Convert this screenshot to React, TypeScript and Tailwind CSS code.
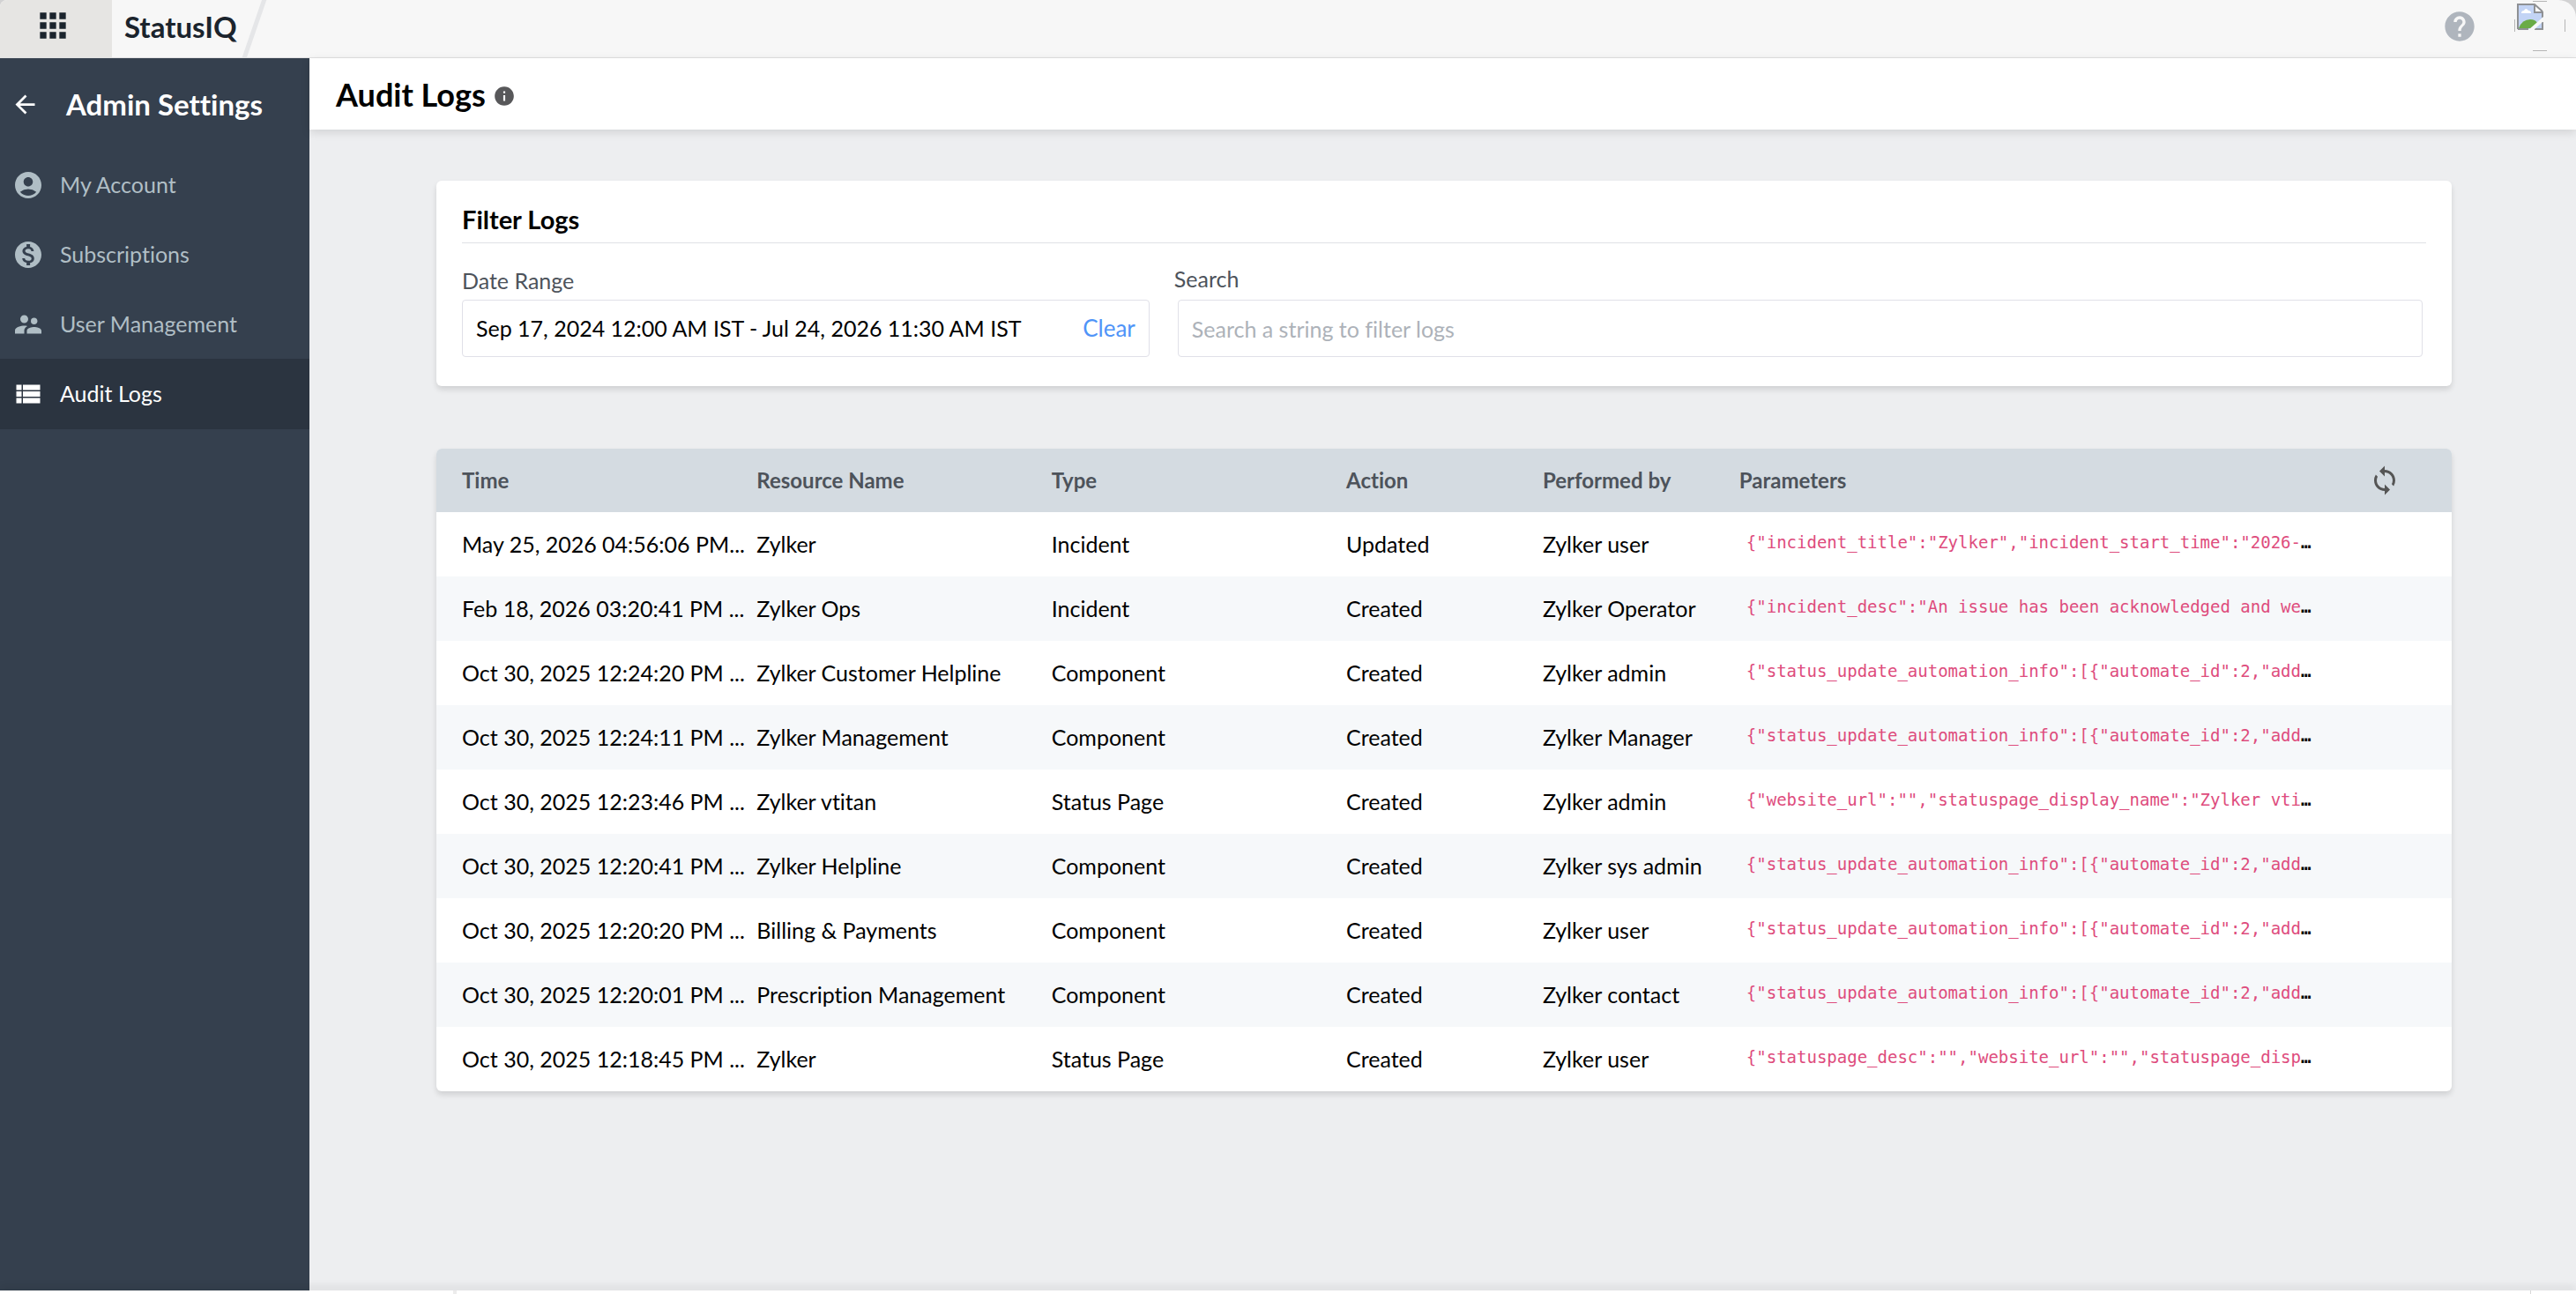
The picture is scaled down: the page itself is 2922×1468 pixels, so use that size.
import type { ReactNode } from "react";
import {
  MdAccountCircle,
  MdApps,
  MdArrowBack,
  MdHelp,
  MdInfo,
  MdMonetizationOn,
  MdSupervisorAccount,
  MdSync,
  MdViewList,
} from "react-icons/md";

const NAV: { label: string; icon: ReactNode; active?: boolean }[] = [
  { label: "My Account", icon: <MdAccountCircle size={36} /> },
  { label: "Subscriptions", icon: <MdMonetizationOn size={36} /> },
  { label: "User Management", icon: <MdSupervisorAccount size={36} /> },
  { label: "Audit Logs", icon: <MdViewList size={36} />, active: true },
];

const COLUMNS = ["Time", "Resource Name", "Type", "Action", "Performed by", "Parameters"];

const AUTOMATION = '{"status_update_automation_info":[{"automate_id":2,"add';

const LOGS = [
  ["May 25, 2026 04:56:06 PM...", "Zylker", "Incident", "Updated", "Zylker user", '{"incident_title":"Zylker","incident_start_time":"2026-'],
  ["Feb 18, 2026 03:20:41 PM ...", "Zylker Ops", "Incident", "Created", "Zylker Operator", '{"incident_desc":"An issue has been acknowledged and we'],
  ["Oct 30, 2025 12:24:20 PM ...", "Zylker Customer Helpline", "Component", "Created", "Zylker admin", AUTOMATION],
  ["Oct 30, 2025 12:24:11 PM ...", "Zylker Management", "Component", "Created", "Zylker Manager", AUTOMATION],
  ["Oct 30, 2025 12:23:46 PM ...", "Zylker vtitan", "Status Page", "Created", "Zylker admin", '{"website_url":"","statuspage_display_name":"Zylker vti'],
  ["Oct 30, 2025 12:20:41 PM ...", "Zylker Helpline", "Component", "Created", "Zylker sys admin", AUTOMATION],
  ["Oct 30, 2025 12:20:20 PM ...", "Billing & Payments", "Component", "Created", "Zylker user", AUTOMATION],
  ["Oct 30, 2025 12:20:01 PM ...", "Prescription Management", "Component", "Created", "Zylker contact", AUTOMATION],
  ["Oct 30, 2025 12:18:45 PM ...", "Zylker", "Status Page", "Created", "Zylker user", '{"statuspage_desc":"","website_url":"","statuspage_disp'],
];

const ROW = "grid grid-cols-[15fr_15fr_15fr_10fr_10fr_30fr_5fr] items-center pl-[29px] pr-7";

function BrokenImage() {
  return (
    <svg x="3" y="3" width="30" height="30" viewBox="0 0 30 30">
      <path d="M1 1h19l9 8v20H1z" fill="#c3d4f5" />
      <path d="M5 11q0-3 3-3 2-4 5 0 3 0 3 3z" fill="#fff" />
      <path d="M2 28q4-10 13-10 6 0 8 4l-7 6z" fill="#6aab46" />
      <path d="M20 1v9h9z" fill="#fff" />
      <path d="M1 29V1h19l9 8M20 1v9h9v6M1 29h12M29 21v8h-9" fill="none" stroke="#8f9194" strokeWidth="2" />
      <path d="M13 30 30 15v5L19 30z" fill="#f7f7f7" />
    </svg>
  );
}

function TopBar() {
  return (
    <div className="shrink-0 bg-[#d2d2d3]">
      <header className="flex h-[66px] items-stretch overflow-hidden rounded-tl-lg rounded-tr-[20px] border-b border-[#e1e1e2] bg-[#f7f7f7]">
        <button type="button" aria-label="Apps" className="flex w-[127px] items-center justify-center bg-[#e6e5e3] pr-2 pb-2 text-[#1b242d]">
          <MdApps size={44} />
        </button>
        <a href="#" className="flex items-center pb-1 pl-[14px] text-[33px] leading-none font-bold text-[#1b242d]">
          StatusIQ
        </a>
        <svg width="32" height="65" viewBox="0 0 32 65" className="ml-1" aria-hidden="true">
          <path d="M4 66 27-1" stroke="#e5e6e8" strokeWidth="5" />
        </svg>
        <div className="ml-auto flex items-start pr-3">
          <button type="button" aria-label="Help" className="mt-[10px] text-[#afb5bd]">
            <MdHelp size={40} />
          </button>
          <button type="button" aria-label="Profile" className="mt-px ml-[42px]">
            <svg width="58" height="57" viewBox="0 0 58 57" aria-hidden="true">
              <path d="M21 .5h16M21 56.5h16M.5 21v14M57.5 21v14" stroke="#b5b5b5" />
              <BrokenImage />
            </svg>
          </button>
        </div>
      </header>
    </div>
  );
}

function Sidebar() {
  return (
    <nav className="w-[351px] shrink-0 bg-[#35404e]">
      <div className="flex h-[104px] items-center pl-3 text-white">
        <a href="#" aria-label="Back">
          <MdArrowBack size={33} />
        </a>
        <h2 className="ml-[30px] text-[33px] leading-10 font-bold">Admin Settings</h2>
      </div>
      <ul>
        {NAV.map((item) => (
          <li key={item.label}>
            <a
              href="#"
              className={
                item.active
                  ? "flex h-20 items-center gap-[18px] bg-[#2b3440] pl-[14px] text-[25px] text-white"
                  : "flex h-[79px] items-center gap-[18px] pl-[14px] text-[25px] text-[#b0bec5]"
              }
            >
              {item.icon}
              {item.label}
            </a>
          </li>
        ))}
      </ul>
    </nav>
  );
}

function FilterCard() {
  return (
    <section className="rounded-md bg-white px-[29px] pt-6 pb-[33px] shadow-[0_4px_6px_rgba(0,0,0,0.12)]">
      <h2 className="border-b border-[#e0e1e5] pt-[2px] pb-2 text-[29px] leading-9 font-bold">Filter Logs</h2>
      <div className="mt-6 flex gap-7">
        <div className="w-[35%]">
          <label htmlFor="range" className="block pt-[2px] pb-[6px] text-[25px] leading-8 text-[#4d535b]">
            Date Range
          </label>
          <div className="flex h-[65px] items-center rounded border border-[#e0e0e8] px-[15px]">
            <input
              id="range"
              readOnly
              value="Sep 17, 2024 12:00 AM IST - Jul 24, 2026 11:30 AM IST"
              className="min-w-0 flex-1 text-[25px] text-black outline-none"
            />
            <button type="button" className="text-[26px] text-[#4f94f8]">
              Clear
            </button>
          </div>
        </div>
        <div className="flex-1 px-1">
          <label htmlFor="search" className="-ml-1 block pb-2 text-[25px] leading-8 text-[#4d535b]">
            Search
          </label>
          <input
            id="search"
            placeholder="Search a string to filter logs"
            className="h-[65px] w-full rounded border border-[#e0e0e8] px-[15px] text-[25px] outline-none placeholder:text-[#adb2b9]"
          />
        </div>
      </div>
    </section>
  );
}

function LogTable() {
  return (
    <table className="mt-[71px] block overflow-hidden rounded-md bg-white shadow-[0_4px_6px_rgba(0,0,0,0.12)]">
      <thead className="block bg-[#d4dbe1]">
        <tr className={`${ROW} h-[72px] text-left text-[24px] text-[#4d535b]`}>
          {COLUMNS.map((name) => (
            <th key={name} className="font-bold">
              {name}
            </th>
          ))}
          <th className="flex justify-center pl-4">
            <button type="button" aria-label="Refresh" className="text-[#555]">
              <MdSync size={36} />
            </button>
          </th>
        </tr>
      </thead>
      <tbody className="block">
        {LOGS.map(([time, resource, type, action, user, params]) => (
          <tr key={time} className={`${ROW} h-[73px] text-[25px] whitespace-nowrap even:bg-[#f6f8fa]`}>
            <td>{time}</td>
            <td>{resource}</td>
            <td>{type}</td>
            <td>{action}</td>
            <td>{user}</td>
            <td className="pb-1 pl-2 font-['DejaVu_Sans_Mono',monospace] text-[19px]">
              <code className="font-['DejaVu_Sans_Mono',monospace] text-[#de4c7d]">{params}</code>
              <b>…</b>
            </td>
            <td />
          </tr>
        ))}
      </tbody>
    </table>
  );
}

export default function App() {
  return (
    <div className="flex min-h-screen flex-col bg-[#edeef0] font-['Lato',sans-serif] text-black [font-variant-ligatures:none]">
      <TopBar />
      <div className="flex flex-1">
        <Sidebar />
        <main className="min-w-0 flex-1">
          <div className="flex h-[81px] items-center gap-2 bg-white pl-[30px] shadow-[0_3px_10px_rgba(0,0,0,0.12)]">
            <h1 className="text-[36px] leading-none font-bold">Audit Logs</h1>
            <MdInfo size={26} className="mt-1 text-[#58585a]" />
          </div>
          <div className="pt-[58px] pr-[141px] pb-16 pl-36">
            <FilterCard />
            <LogTable />
          </div>
        </main>
      </div>
      <footer className="relative flex h-1 bg-white shadow-[0_-4px_8px_rgba(0,0,0,0.12)]">
        <div className="w-[518px] border-r-4 border-[#ececec]" />
        <div className="flex-1" />
        <div className="w-[52px] border-l border-[#d8d8d8]" />
      </footer>
    </div>
  );
}
